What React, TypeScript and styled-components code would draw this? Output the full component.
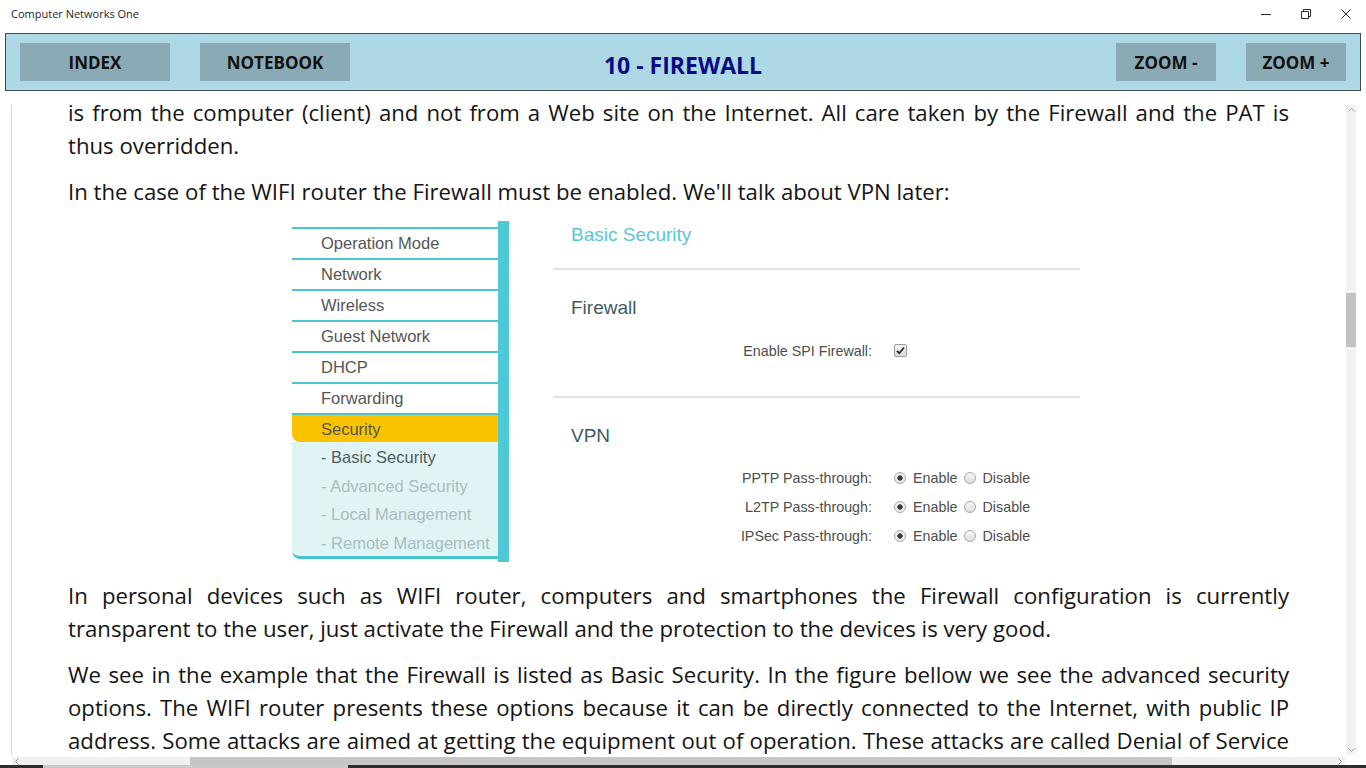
import React from "react";
import styled, { createGlobalStyle } from "styled-components";

const GlobalStyle = createGlobalStyle`
  html, body {
    margin: 0;
    padding: 0;
    background: #fff;
    overflow: hidden;
  }
  body {
    font-family: "Open Sans", "Noto Sans", sans-serif;
  }
`;

const Window = styled.div`
  width: 1366px;
  height: 768px;
  display: flex;
  flex-direction: column;
  background: #fff;
  overflow: hidden;
`;

// title bar
const TitleBar = styled.div`
  flex: none;
  height: 33px;
  display: flex;
  align-items: flex-start;
  justify-content: space-between;
  padding-left: 11px;
`;

const AppName = styled.span`
  padding-top: 6px;
  font-size: 11px;
  color: #1e1e1e;
`;

const Controls = styled.div`
  display: flex;
`;

const ControlButton = styled.div`
  width: 40px;
  height: 28px;
  display: flex;
  align-items: center;
  justify-content: center;

  svg {
    fill: none;
    stroke: #2b2b2b;
    stroke-width: 1;
  }
`;

// toolbar
const Toolbar = styled.header`
  flex: none;
  height: 58px;
  margin: 0 5px;
  box-sizing: border-box;
  border: 1px solid #3f4b50;
  background: #add8e6;
  display: grid;
  grid-template-columns: 1fr auto 1fr;
  align-items: center;
  padding: 0 14px;
`;

const ButtonGroup = styled.div<{ $end?: boolean }>`
  display: flex;
  gap: 30px;
  justify-self: ${(p) => (p.$end ? "end" : "start")};
`;

const ToolButton = styled.button<{ $w: number }>`
  width: ${(p) => p.$w}px;
  height: 38px;
  padding: 0;
  border: none;
  background: #8aaab5;
  color: #111;
  font-family: "Open Sans", sans-serif;
  font-weight: 700;
  font-size: 17px;
`;

const PageTitle = styled.h1`
  margin: 0;
  padding-top: 5px;
  font-family: "Open Sans", sans-serif;
  font-weight: 700;
  font-size: 23px;
  color: #0a0a82;
`;

// reading area
const Content = styled.main`
  flex: 1;
  position: relative;
  overflow: hidden;

  &::before {
    content: "";
    position: absolute;
    left: 11px;
    top: 14px;
    bottom: 10px;
    width: 1px;
    background: #d6d6d6;
  }
`;

const Article = styled.article`
  width: 1221px;
  margin-left: 68px;
  padding-top: 5px;
  color: #141414;
  font-family: "Open Sans", sans-serif;
  font-size: 22.2px;
`;

const Paragraph = styled.p`
  margin: 0 0 13px;
  line-height: 33px;
`;

const Line = styled.span<{ $last?: boolean }>`
  display: block;
  text-align: justify;
  text-align-last: ${(p) => (p.$last ? "left" : "justify")};
`;

// router screenshot
const Figure = styled.figure`
  margin: 0 0 17px 224px;
  height: 341px;
  display: flex;
  font-family: "Liberation Sans", Arial, sans-serif;
`;

const SideMenu = styled.nav`
  width: 206px;
  border-right: 11px solid #4fc9d5;
  padding-top: 6px;
  display: flex;
  flex-direction: column;
`;

const MenuItem = styled.div<{ $active?: boolean }>`
  height: ${(p) => (p.$active ? 29 : 31)}px;
  box-sizing: border-box;
  border-top: 2px solid #49c5d1;
  padding-left: 29px;
  line-height: 29px;
  font-size: 16.5px;
  color: #555;
  background: ${(p) => (p.$active ? "#f9c300" : "transparent")};
  border-bottom-left-radius: ${(p) => (p.$active ? "8px" : "0")};
`;

const SubMenu = styled.div`
  background: #e0f4f6;
  border-bottom: 3px solid #49c5d1;
  border-bottom-left-radius: 8px;
`;

const SubItem = styled.div<{ $current?: boolean }>`
  height: 28.5px;
  line-height: 30px;
  padding-left: 29px;
  font-size: 16.5px;
  color: ${(p) => (p.$current ? "#515c5f" : "#a9bdbe")};
`;

const Panel = styled.section`
  width: 527px;
  margin-left: 44px;
  display: flex;
  flex-direction: column;
`;

const PanelTitle = styled.h2<{ $accent?: boolean; $top?: number }>`
  margin: ${(p) => p.$top ?? 0}px 0 0;
  padding-left: 18px;
  font-weight: 400;
  font-size: 19px;
  line-height: 27px;
  color: ${(p) => (p.$accent ? "#5cc6d5" : "#3e5c61")};
`;

const Rule = styled.hr<{ $top: number }>`
  margin: ${(p) => p.$top}px 0 0;
  border: none;
  border-top: 2px solid #e2e2e2;
`;

const Fields = styled.div<{ $top: number }>`
  margin-top: ${(p) => p.$top}px;
  display: grid;
  grid-template-columns: 319px auto;
  grid-auto-rows: 29px;
  column-gap: 22px;
  align-items: center;
  font-size: 14.3px;
  color: #4d4d4d;
`;

const FieldLabel = styled.span`
  text-align: right;
`;

const Options = styled.div`
  display: flex;
  align-items: center;
`;

const Option = styled.span`
  display: inline-flex;
  align-items: center;
  gap: 7px;
  margin-right: 6px;
`;

const Radio = styled.span<{ $on?: boolean }>`
  width: 12px;
  height: 12px;
  box-sizing: border-box;
  border-radius: 50%;
  border: 1px solid #a8a8a8;
  background: ${(p) =>
    p.$on
      ? "radial-gradient(circle, #3a3a3a 0 2.4px, #ededed 3px)"
      : "linear-gradient(#f7f7f7, #dedede)"};
`;

const CheckBox = styled.span`
  width: 13px;
  height: 13px;
  box-sizing: border-box;
  border: 1px solid #9c9c9c;
  border-radius: 2px;
  background: linear-gradient(#f4f4f4, #dcdcdc);
  display: flex;
  align-items: center;
  justify-content: center;
`;

// scrollbars
const VScroll = styled.div`
  position: absolute;
  left: 1346px;
  top: 14px;
  width: 10px;
  height: 650px;
  background: #f2f2f2;
  display: flex;
  flex-direction: column;
  align-items: center;
  justify-content: space-between;
  padding: 3px 0;
  box-sizing: border-box;
`;

const VThumb = styled.div`
  position: absolute;
  left: 0;
  top: 188px;
  width: 10px;
  height: 54px;
  background: #c2c2c2;
`;

const HScroll = styled.div`
  position: absolute;
  left: 12px;
  top: 666px;
  width: 1333px;
  height: 8px;
  background: #f0f0f0;
  display: flex;
  align-items: center;
  justify-content: space-between;
  padding: 0 3px;
  box-sizing: border-box;
`;

const HThumb = styled.div`
  position: absolute;
  left: 178px;
  top: 0;
  width: 982px;
  height: 8px;
  background: #c6c6c6;
`;

const Arrow = styled.svg`
  fill: none;
  stroke: #9a9a9a;
  stroke-width: 1;
  position: relative;
  z-index: 1;
`;

const TaskStrip = styled.div`
  flex: none;
  height: 3px;
  background: linear-gradient(
    to right,
    #2d2d2d 43px,
    #c9c9c9 43px,
    #c9c9c9 348px,
    #2d2d2d 348px
  );
`;

const menu = ["Operation Mode", "Network", "Wireless", "Guest Network", "DHCP", "Forwarding"];
const subMenu = ["Basic Security", "Advanced Security", "Local Management", "Remote Management"];
const passThrough = ["PPTP Pass-through:", "L2TP Pass-through:", "IPSec Pass-through:"];

const RouterFigure: React.FC = () => (
  <Figure>
    <SideMenu>
      {menu.map((m) => (
        <MenuItem key={m}>{m}</MenuItem>
      ))}
      <MenuItem $active>Security</MenuItem>
      <SubMenu>
        {subMenu.map((s, i) => (
          <SubItem key={s} $current={i === 0}>
            - {s}
          </SubItem>
        ))}
      </SubMenu>
    </SideMenu>

    <Panel>
      <PanelTitle $accent>Basic Security</PanelTitle>
      <Rule $top={20} />
      <PanelTitle $top={24}>Firewall</PanelTitle>
      <Fields $top={15}>
        <FieldLabel>Enable SPI Firewall:</FieldLabel>
        <Options>
          <CheckBox>
            <svg width="9" height="9" viewBox="0 0 9 9">
              <path d="M1 4.8l2.3 2.4L8 1.5" fill="none" stroke="#222" strokeWidth="1.8" />
            </svg>
          </CheckBox>
        </Options>
      </Fields>
      <Rule $top={31} />
      <PanelTitle $top={24}>VPN</PanelTitle>
      <Fields $top={14}>
        {passThrough.map((label) => (
          <React.Fragment key={label}>
            <FieldLabel>{label}</FieldLabel>
            <Options>
              <Option>
                <Radio $on />
                Enable
              </Option>
              <Option>
                <Radio />
                Disable
              </Option>
            </Options>
          </React.Fragment>
        ))}
      </Fields>
    </Panel>
  </Figure>
);

export default function App() {
  return (
    <>
      <GlobalStyle />
      <Window>
        <TitleBar>
          <AppName>Computer Networks One</AppName>
          <Controls>
            <ControlButton>
              <svg width="10" height="10">
                <path d="M0 5.5h10" />
              </svg>
            </ControlButton>
            <ControlButton>
              <svg width="10" height="10">
                <path d="M2.5 2.5V0.5h7v7h-2M0.5 2.5h7v7h-7z" />
              </svg>
            </ControlButton>
            <ControlButton>
              <svg width="10" height="10">
                <path d="M0.5 0.5l9 9M9.5 0.5l-9 9" />
              </svg>
            </ControlButton>
          </Controls>
        </TitleBar>

        <Toolbar>
          <ButtonGroup>
            <ToolButton $w={150}>INDEX</ToolButton>
            <ToolButton $w={150}>NOTEBOOK</ToolButton>
          </ButtonGroup>
          <PageTitle>10 - FIREWALL</PageTitle>
          <ButtonGroup $end>
            <ToolButton $w={100}>ZOOM -</ToolButton>
            <ToolButton $w={100}>ZOOM +</ToolButton>
          </ButtonGroup>
        </Toolbar>

        <Content>
          <Article>
            <Paragraph>
              <Line>
                is from the computer (client) and not from a Web site on the Internet. All care taken by the Firewall and the PAT is
              </Line>
              <Line $last>thus overridden.</Line>
            </Paragraph>
            <Paragraph>
              <Line $last>In the case of the WIFI router the Firewall must be enabled. We'll talk about VPN later:</Line>
            </Paragraph>

            <RouterFigure />

            <Paragraph>
              <Line>
                In personal devices such as WIFI router, computers and smartphones the Firewall configuration is currently
              </Line>
              <Line $last>
                transparent to the user, just activate the Firewall and the protection to the devices is very good.
              </Line>
            </Paragraph>
            <Paragraph>
              <Line>
                We see in the example that the Firewall is listed as Basic Security. In the figure bellow we see the advanced security
              </Line>
              <Line>
                options. The WIFI router presents these options because it can be directly connected to the Internet, with public IP
              </Line>
              <Line>
                address. Some attacks are aimed at getting the equipment out of operation. These attacks are called Denial of Service
              </Line>
            </Paragraph>
          </Article>

          <VScroll>
            <VThumb />
            <Arrow width="7" height="4">
              <path d="M0.5 3.5l3-3 3 3" />
            </Arrow>
            <Arrow width="7" height="4">
              <path d="M0.5 0.5l3 3 3-3" />
            </Arrow>
          </VScroll>
          <HScroll>
            <HThumb />
            <Arrow width="4" height="7">
              <path d="M3.5 0.5l-3 3 3 3" />
            </Arrow>
            <Arrow width="4" height="7">
              <path d="M0.5 0.5l3 3-3 3" />
            </Arrow>
          </HScroll>
        </Content>
        <TaskStrip />
      </Window>
    </>
  );
}
